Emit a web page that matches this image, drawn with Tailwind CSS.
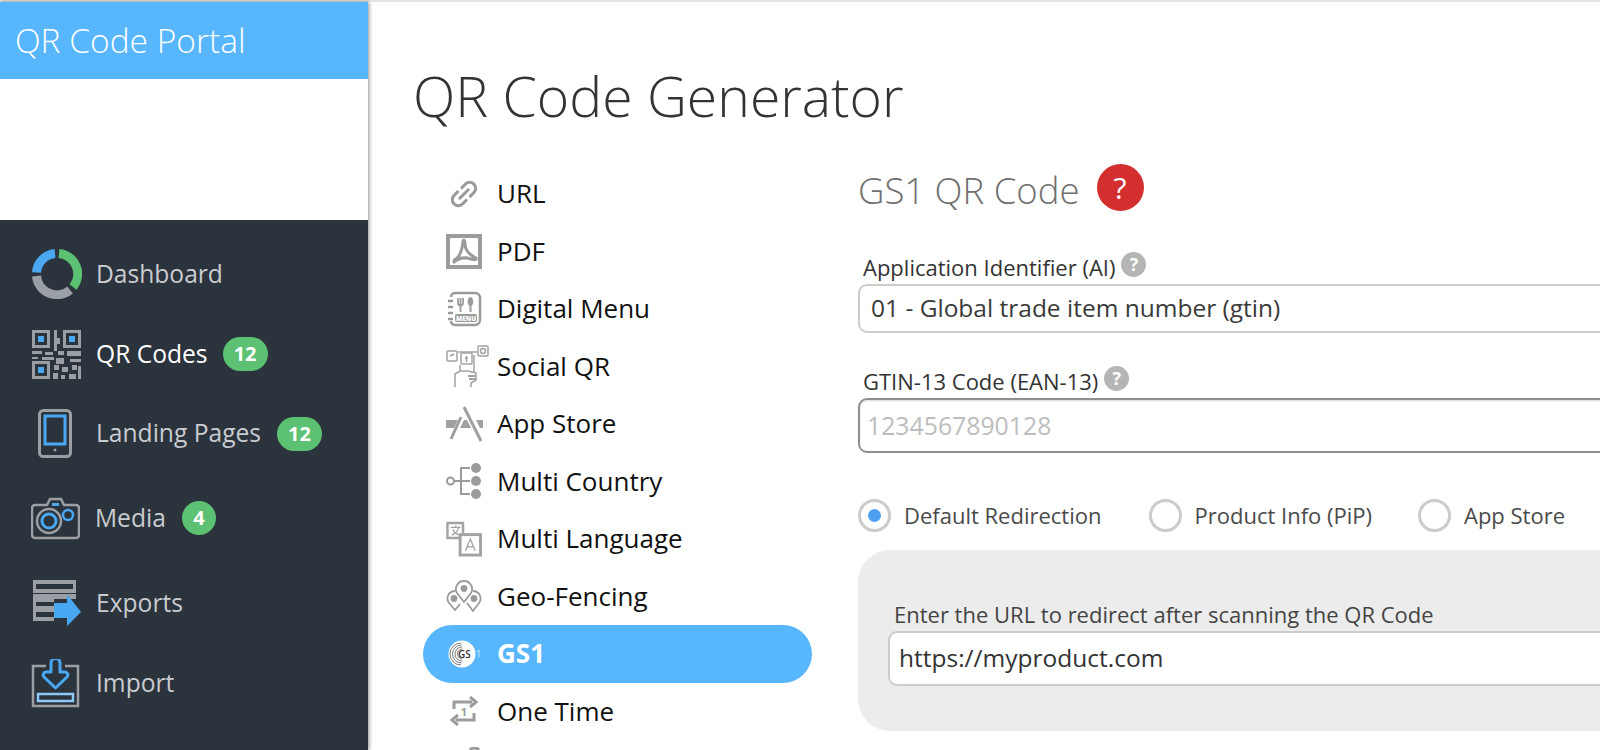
<!DOCTYPE html>
<html lang="en">
<head>
    <meta charset="UTF-8">
    <title>QR Code Generator</title>
    <script src="https://cdn.jsdelivr.net/npm/@tailwindcss/browser@4"></script>
</head>
<body class="w-[1600px] h-[750px] overflow-hidden bg-white font-['Open_Sans',sans-serif]">
<div class="flex h-[750px] border-t-2 border-[#e4e4e4]">

    <!-- Sidebar -->
    <aside class="relative z-10 w-[368px] shrink-0 flex flex-col shadow-[1px_0_4px_rgba(0,0,0,0.45)]">
        <div class="h-[77px] bg-[#58b6fc] pl-[15px] flex items-center text-[33.5px] font-light text-white">QR Code Portal</div>
        <div class="h-[141px] bg-white"></div>
        <nav class="flex-1 bg-[#2b333d] pt-[14px] text-[24.6px] text-[#c9ccd0]">
            <div class="h-[80px] flex items-center pl-[32px] gap-[14px]">
                <svg class="w-[50px] h-[50px]" viewBox="0 0 50 50" fill="none" stroke-width="9">
                    <path d="M4.5 23.5A20.5 20.5 0 0 1 23 4.6" stroke="#4aa8f2"/>
                    <path d="M27 4.6A20.5 20.5 0 0 1 41 38" stroke="#5cc172"/>
                    <path d="M38 41A20.5 20.5 0 0 1 4.5 27" stroke="#9aa0a5"/>
                </svg>
                <span>Dashboard</span>
            </div>
            <div class="h-[80px] flex items-center pl-[32px] gap-[15px]">
                <svg class="w-[49px] h-[49px]" viewBox="0 0 49 49" fill="#9b9fa3">
                    <path fill-rule="evenodd" d="M0 0h18v18H0zM3 3v12h12V3zM31 0h18v18H31zM34 3v12h12V3zM0 31h18v18H0zM3 34v12h12V34z"/>
                    <rect x="6" y="6" width="6" height="6" fill="#4aa8f2"/><rect x="37" y="6" width="6" height="6" fill="#4aa8f2"/><rect x="6" y="37" width="6" height="6" fill="#4aa8f2"/>
                    <path d="M22 0h3v8h3v6h-3v7h-3zM0 21h10v3H0zM13 22h8v3h-8zM26 21h6v4h-6zM35 21h14v5H35zM0 27h6v2H0zM10 27h12v3H10zM24 28h8v6h-8zM38 29h11v3H38zM22 35h5v5h-5zM30 37h6v5h-6zM40 35h5v5h-5zM46 36h3v13h-3zM21 43h5v6h-5zM29 45h4v4h-4zM37 44h7v5h-7z"/>
                </svg>
                <span class="text-white">QR Codes</span>
                <span class="w-[45px] h-[34px] rounded-full bg-[#5cc172] text-white text-[20px] font-bold flex items-center justify-center">12</span>
            </div>
            <div class="h-[79px] flex items-center pl-[38px]">
                <svg class="w-[34px] h-[49px]" viewBox="0 0 34 49" fill="none">
                    <rect x="1.5" y="1.5" width="31" height="46" rx="4" stroke="#9b9fa3" stroke-width="3"/>
                    <rect x="7" y="7" width="20" height="28" stroke="#4aa8f2" stroke-width="3"/>
                    <circle cx="17" cy="41" r="1.5" fill="#9b9fa3"/>
                </svg>
                <span class="ml-[24px]">Landing Pages</span>
                <span class="ml-[16px] w-[45px] h-[34px] rounded-full bg-[#5cc172] text-white text-[20px] font-bold flex items-center justify-center">12</span>
            </div>
            <div class="h-[90px] flex items-center pl-[31px] gap-[15px]">
                <svg class="w-[49px] h-[43px]" viewBox="0 0 49 43" fill="none">
                    <path d="M4 8h12l3-6h11l3 6h12a3 3 0 0 1 3 3v27a3 3 0 0 1-3 3H4a3 3 0 0 1-3-3V11a3 3 0 0 1 3-3z" stroke="#9b9fa3" stroke-width="2.5"/>
                    <circle cx="18" cy="24" r="12" stroke="#9b9fa3" stroke-width="2.5"/>
                    <circle cx="18" cy="24" r="7" stroke="#4aa8f2" stroke-width="3"/>
                    <circle cx="37" cy="18" r="5" stroke="#4aa8f2" stroke-width="2.5"/>
                    <rect x="21" y="6" width="7" height="3" fill="#4aa8f2"/>
                </svg>
                <span class="mr-px">Media</span>
                <span class="w-[34px] h-[34px] rounded-full bg-[#5cc172] text-white text-[20px] font-bold flex items-center justify-center">4</span>
            </div>
            <div class="h-[80px] flex items-center pl-[32px] gap-[15px]">
                <svg class="w-[49px] h-[48px]" viewBox="0 0 49 48" fill="none">
                    <path fill-rule="evenodd" fill="#9b9fa3" d="M1 1h43v13H1zM4 5v5h37V5zM1 15h43v5H22v3H4v4h18v2H1zM1 29h21v13H1zM4 33v5h18v-5z"/>
                    <path d="M22 24h13v-9l14 18-14 14v-8H22z" fill="#4aa8f2"/>
                </svg>
                <span>Exports</span>
            </div>
            <div class="h-[80px] flex items-center pl-[31px] gap-[16px]">
                <svg class="w-[49px] h-[49px]" viewBox="0 0 49 49" fill="none">
                    <path d="M15 7H2v40h45V7H34" stroke="#9b9fa3" stroke-width="2.5"/>
                    <path d="M20 4a4.500 4.500 0 0 1 9 0v9h5a3 3 0 0 1 2 5L24.500 29 13 18a3 3 0 0 1 2-5h5z" stroke="#4aa8f2" stroke-width="3" stroke-linejoin="round"/>
                    <rect x="7" y="35" width="35" height="7" stroke="#8cc9f7" stroke-width="2.500"/>
                </svg>
                <span>Import</span>
            </div>
        </nav>
    </aside>

    <!-- Main -->
    <main class="flex-1 min-w-0 pl-[45px] pt-[53px] overflow-hidden">
        <h1 class="h-[82px] text-[55.3px] leading-[82px] font-light text-[#333333]">QR Code Generator</h1>
        <div class="flex pt-[28px]">

            <!-- QR types -->
            <ul class="w-[389px] ml-[10px] shrink-0 text-[26px] text-[#111111]">
                <li class="h-[57.500px] pl-[23px] flex items-center gap-[15px]">
                    <svg class="w-[36px] h-[32px]" viewBox="0 0 36 32" fill="none" stroke="#9b9b9b" stroke-width="3" stroke-linecap="round">
                        <g transform="rotate(-45 18 16)">
                            <path d="M15 10H10a6 6 0 0 0 0 12h5"/>
                            <path d="M21 10h5a6 6 0 0 1 0 12h-5"/>
                            <path d="M12 16h12"/>
                        </g>
                    </svg>
                    <span>URL</span>
                </li>
                <li class="h-[57.500px] pl-[23px] flex items-center gap-[15px]">
                    <svg class="w-[36px] h-[35px]" viewBox="0 0 36 35" fill="none" stroke="#9b9b9b">
                        <rect x="2" y="2" width="32" height="31" stroke-width="4"/>
                        <path d="M7 27c5-2 9-8 10-20 1-2 2 0 2 3 0 6 3 10 11 14 1 2-2 2-5 1-6-2-12-2-18 4" stroke-width="3" stroke-linejoin="round"/>
                    </svg>
                    <span>PDF</span>
                </li>
                <li class="h-[57.500px] pl-[23px] flex items-center gap-[15px]">
                    <svg class="w-[36px] h-[36px]" viewBox="0 0 36 36" fill="none" stroke="#9b9b9b">
                        <path d="M5 6a4 4 0 0 1 4-4h20a5 5 0 0 1 5 5v22a5 5 0 0 1-5 5H9a4 4 0 0 1-4-4" stroke-width="2.500"/>
                        <path d="M2 10h5M2 16h5M2 22h5M2 28h5" stroke-width="2.500"/>
                        <path d="M12 7v5a2.500 2.500 0 0 0 5 0V7M14.500 7v14" stroke-width="1.800"/>
                        <path d="M24.500 6c3 0 4 7 1 9v6h-2v-6c-3-2-2-9 1-9z" fill="#9b9b9b" stroke="none"/>
                        <rect x="9" y="23" width="22" height="8" rx="2" fill="#9b9b9b" stroke="none"/>
                        <text x="20" y="29.500" text-anchor="middle" font-size="6.500" font-weight="800" fill="white" stroke="none">MENU</text>
                    </svg>
                    <span>Digital Menu</span>
                </li>
                <li class="h-[57.500px] pl-[23px] flex items-center gap-[15px]">
                    <svg class="w-[43px] h-[43px] -mr-[7px]" viewBox="0 0 43 43" fill="none" stroke="#a3a3a3" stroke-width="1.500">
                        <rect x="1" y="6" width="10" height="10" rx="1"/><rect x="15" y="8" width="11" height="11" rx="1"/><rect x="32" y="1" width="10" height="10" rx="1"/>
                        <circle cx="37" cy="6" r="2.500"/><path d="M4 11l4-2M20.500 11v6M19 13h3M12 7h19"/>
                        <path d="M9 42V29l5-3h8l8 2v7l-5 3v4M14 20v6M28 10v18" />
                        <path d="M22 31h8M23 34h7" stroke-width="2"/>
                    </svg>
                    <span>Social QR</span>
                </li>
                <li class="h-[57.500px] pl-[23px] flex items-center gap-[15px]">
                    <svg class="w-[37px] h-[36px] -mr-px" viewBox="0 0 37 36" fill="#a0a0a0">
                        <path d="M0 14h12l-4 8H0zM30 14h7v8h-3zM18 14h3l4 8H14z"/>
                        <path d="M18 1L35 35M15 11L5 33" fill="none" stroke="#a0a0a0" stroke-width="3"/>
                    </svg>
                    <span>App Store</span>
                </li>
                <li class="h-[57.500px] pl-[23px] flex items-center gap-[15px]">
                    <svg class="w-[36px] h-[36px]" viewBox="0 0 36 36" fill="none" stroke="#9b9b9b" stroke-width="2">
                        <circle cx="4.500" cy="18" r="3.500"/>
                        <path d="M8 18h7M24 5H15v26h9M15 18h9"/>
                        <circle cx="30" cy="5" r="5" fill="#9b9b9b" stroke="none"/><circle cx="30" cy="18" r="5" fill="#9b9b9b" stroke="none"/><circle cx="30" cy="31" r="5" fill="#9b9b9b" stroke="none"/>
                    </svg>
                    <span>Multi Country</span>
                </li>
                <li class="h-[57.500px] pl-[23px] flex items-center gap-[15px]">
                    <svg class="w-[36px] h-[36px]" viewBox="0 0 37 36" fill="none" stroke="#a3a3a3">
                        <path d="M14 17H1.500V1.500h16V12" stroke-width="2.500"/>
                        <path d="M5 6h10M10 4v2M13 6c-1 4-4 7-7 8M7 8c1 3 4 5 7 6" stroke-width="1.300"/>
                        <rect x="14.500" y="13.500" width="21" height="21" stroke-width="3"/>
                        <path d="M20 30l5-12 5 12M22 26h6" stroke-width="1.300"/>
                    </svg>
                    <span>Multi Language</span>
                </li>
                <li class="h-[57.500px] pl-[23px] flex items-center gap-[15px]">
                    <svg class="w-[36px] h-[32px]" viewBox="0 0 36 32" fill="none" stroke="#9b9b9b" stroke-width="1.800" stroke-linejoin="round">
                        <path d="M9 11a7.500 7.500 0 0 0-6 12l6 7 5-6"/>
                        <path d="M27 11a7.500 7.500 0 0 1 6 12l-6 8-6-8"/>
                        <path d="M18 1a8 8 0 0 1 7 12l-7 9-7-9a8 8 0 0 1 7-12z"/>
                        <circle cx="18" cy="8.500" r="2.500" fill="#9b9b9b"/><circle cx="8" cy="18.500" r="2.500" fill="#9b9b9b"/><circle cx="28" cy="18.500" r="2.500" fill="#9b9b9b"/>
                    </svg>
                    <span>Geo-Fencing</span>
                </li>
                <li class="h-[57.500px] pl-[23px] flex items-center gap-[15px] bg-[#58b6fc] rounded-full">
                    <span class="relative w-[36px] h-[30px] flex items-center">
                        <svg class="w-[28px] h-[28px] ml-[2px]" viewBox="0 0 28 28" fill="white" stroke="#555555" stroke-width="0.800">
                            <circle cx="14" cy="14" r="13.500" stroke="none"/>
                            <path fill="none" d="M13 3a11 11 0 0 0 0 22M13.500 5a9 9 0 0 0 0 18M14 7a7 7 0 0 0 0 14M14.500 9a5 5 0 0 0 0 10"/>
                        </svg>
                        <span class="absolute left-[12px] top-[8px] text-[10px] leading-[14px] text-[#333333] font-semibold">GS</span>
                        <span class="absolute left-[30px] top-[8px] text-[9px] leading-[14px] text-white/80">1</span>
                    </span>
                    <span class="font-bold text-white">GS1</span>
                </li>
                <li class="h-[57.500px] pl-[23px] flex items-center gap-[15px]">
                    <svg class="w-[36px] h-[30px]" viewBox="0 0 36 30" fill="none" stroke="#9b9b9b" stroke-width="3">
                        <path d="M8 13V6h18M24 1l6 5-6 5M28 17v7H10M12 19l-6 5 6 5" />
                        <text x="18" y="20" text-anchor="middle" font-size="11" font-weight="700" fill="#9b9b9b" stroke="none">1</text>
                    </svg>
                    <span>One Time</span>
                </li>
                <li class="h-[57.500px] pl-[23px] flex items-start">
                    <svg class="w-[36px] h-[30px] mt-[7px]" viewBox="0 0 36 30" fill="none" stroke="#9b9b9b" stroke-width="3">
                        <path d="M24 3a6 6 0 0 1 9 0"/>
                    </svg>
                </li>
            </ul>

            <!-- GS1 form -->
            <section class="ml-[46px] w-[800px] shrink-0 -mt-[1px]">
                <div class="flex items-center h-[52px] gap-[17px]">
                    <h2 class="text-[36.500px] font-light text-[#6f6f6f]">GS1 QR Code</h2>
                    <span class="w-[47px] h-[47px] -mt-[5px] rounded-full bg-[#d32f2f] text-white text-[30px] flex items-center justify-center">?</span>
                </div>

                <div class="mt-[34px] pl-[5px] h-[34px] flex items-center gap-[6px] text-[22px] text-[#333333]">
                    <span>Application Identifier (AI)</span>
                    <span class="w-[25px] h-[25px] -mt-[5px] rounded-full bg-[#b5b5b5] text-white text-[18px] font-bold flex items-center justify-center">?</span>
                </div>
                <div class="h-[49px] border-2 border-[#cccccc] rounded-[9px] pl-[11px] flex items-center text-[24.500px] text-[#3a3a3a]">01 - Global trade item number (gtin)</div>

                <div class="mt-[31px] pl-[5px] h-[34px] flex items-center gap-[6px] text-[22px] text-[#333333]">
                    <span>GTIN-13 Code (EAN-13)</span>
                    <span class="w-[25px] h-[25px] -mt-[5px] rounded-full bg-[#b5b5b5] text-white text-[18px] font-bold flex items-center justify-center">?</span>
                </div>
                <div class="h-[55px] border-2 border-[#8f8f8f] rounded-[9px] pl-[7px] flex items-center text-[24.800px] text-[#bdbdbd] shadow-[inset_0_1px_2px_rgba(0,0,0,0.15)]">1234567890128</div>

                <div class="mt-[46px] h-[33px] flex items-center text-[22px] text-[#4a4a4a]">
                    <span class="w-[33px] h-[33px] rounded-full border-[3px] border-[#cccccc] flex items-center justify-center"><span class="w-[13px] h-[13px] rounded-full bg-[#4f9ff0]"></span></span>
                    <span class="ml-[13px]">Default Redirection</span>
                    <span class="ml-[47px] w-[33px] h-[33px] rounded-full border-[3px] border-[#cccccc]"></span>
                    <span class="ml-[13px]">Product Info (PiP)</span>
                    <span class="ml-[46px] w-[33px] h-[33px] rounded-full border-[3px] border-[#cccccc]"></span>
                    <span class="ml-[13px]">App Store</span>
                </div>

                <div class="mt-[18px] h-[181px] w-[800px] bg-[#ececec] rounded-[32px] pl-[30px] pt-[48px]">
                    <div class="pl-[6px] h-[33px] flex items-center text-[22px] text-[#444444]">Enter the URL to redirect after scanning the QR Code</div>
                    <div class="h-[55px] bg-white border-2 border-[#cccccc] rounded-[9px] pl-[9px] flex items-center text-[24.500px] text-[#333333]">https://myproduct.com</div>
                </div>
            </section>
        </div>
    </main>
</div>
</body>
</html>
